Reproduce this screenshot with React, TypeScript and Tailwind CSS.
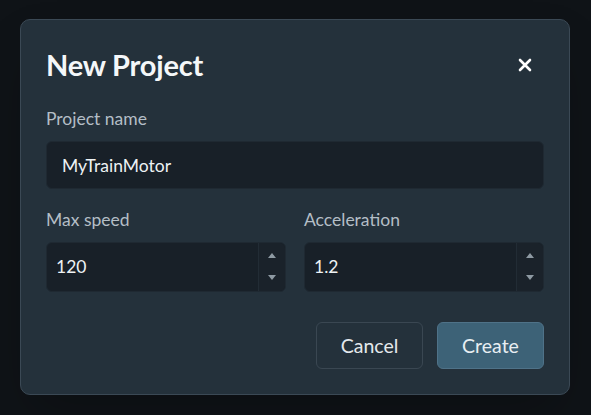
import React, { useState } from 'react';

interface NumberFieldProps {
  label: string;
  value: string;
  onChange: (value: string) => void;
}

const NumberField: React.FC<NumberFieldProps> = ({ label, value, onChange }) => {
  return (
    <div className="flex flex-col flex-1 min-w-0">
      <label className="text-[17.5px] leading-6 text-[#b4bec6] mb-[10px]">{label}</label>
      <div className="flex h-[50px] rounded-[6px] bg-[#182028] border border-[#1f2932] overflow-hidden">
        <input
          type="text"
          value={value}
          onChange={(e) => onChange(e.target.value)}
          className="flex-1 min-w-0 bg-transparent outline-none pl-[9px] text-[17.5px] text-[#eef2f4]"
        />
        <div className="w-[27px] flex flex-col items-center justify-between pt-[10px] pb-[11px] border-l border-[#222c35] bg-[#1a222a]">
          <span className="w-0 h-0 border-l-[4px] border-r-[4px] border-b-[5px] border-l-transparent border-r-transparent border-b-[#8e9aa3]" />
          <span className="w-0 h-0 border-l-[4px] border-r-[4px] border-t-[5px] border-l-transparent border-r-transparent border-t-[#8e9aa3]" />
        </div>
      </div>
    </div>
  );
};

const App: React.FC = () => {
  const [name, setName] = useState('MyTrainMotor');
  const [speed, setSpeed] = useState('120');
  const [accel, setAccel] = useState('1.2');

  return (
    <div
      className="min-h-screen w-full bg-[#0f1317] pt-[19px] pl-[20px]"
      style={{ fontFamily: 'Lato, "Open Sans", sans-serif' }}
    >
      <div className="w-[550px] rounded-[10px] border border-[#3b4955] bg-[#24313b] px-[25px] pt-[27px] pb-[25px] shadow-2xl">
        <div className="flex items-center justify-between h-9">
          <h2 className="text-[29px] font-bold text-[#f4f7f9] tracking-[-0.2px]">New Project</h2>
          <button className="w-8 h-8 flex items-center justify-center text-white mr-[3px]">
            <svg width="14" height="14" viewBox="0 0 14 14">
              <path d="M2 2 L12 12 M12 2 L2 12" stroke="#ffffff" strokeWidth="2.6" strokeLinecap="round" />
            </svg>
          </button>
        </div>

        <div className="mt-6 flex flex-col">
          <label className="text-[17.5px] leading-6 text-[#b4bec6] mb-[10px]">Project name</label>
          <input
            type="text"
            value={name}
            onChange={(e) => setName(e.target.value)}
            className="h-[48px] rounded-[6px] bg-[#182028] border border-[#1f2932] px-[15px] text-[17.5px] text-[#eef2f4] outline-none"
          />
        </div>

        <div className="mt-[19px] flex gap-[18px]">
          <NumberField label="Max speed" value={speed} onChange={setSpeed} />
          <NumberField label="Acceleration" value={accel} onChange={setAccel} />
        </div>

        <div className="mt-[30px] flex justify-end gap-[14px]">
          <button className="w-[107px] h-[47px] rounded-[6px] border border-[#3a4752] text-[19.5px] text-[#e4e9ec]">
            Cancel
          </button>
          <button className="w-[107px] h-[47px] rounded-[6px] border border-[#4f7288] bg-[#3d6277] text-[19.5px] text-[#e8eef2]">
            Create
          </button>
        </div>
      </div>
    </div>
  );
};

export default App;
